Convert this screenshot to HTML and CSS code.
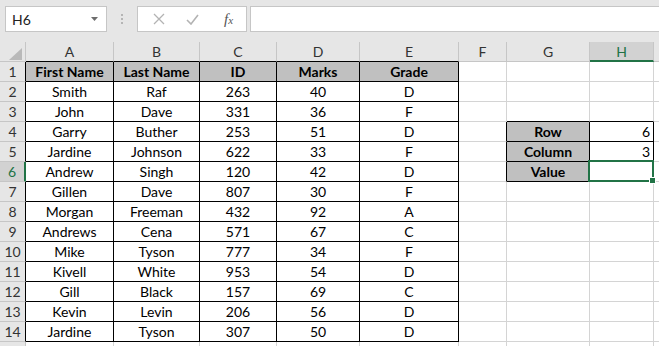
FILE: index.html
```html
<html>
    <head>
        <meta charset="UTF-8">
        <title>Sheet</title>
        <link rel="stylesheet" href="styles.css">
    </head>
    <body>
        <div class="toolbar">
            <div class="namebox">
                <span>H6</span>
                <svg class="caret" width="7" height="4" viewBox="0 0 7 4"><polygon points="0,0 7,0 3.5,4" fill="#6d6d6d"/></svg>
            </div>
            <div class="dots"><i></i><i></i><i></i></div>
            <div class="fxbox">
                <svg width="12" height="12" viewBox="0 0 12 12"><path d="M1 1 L11 11 M11 1 L1 11" stroke="#b3b3b3" stroke-width="1.3" fill="none"/></svg>
                <svg width="13" height="11" viewBox="0 0 13 11"><path d="M1 6 L5 10 L12 1" stroke="#b3b3b3" stroke-width="1.6" fill="none"/></svg>
                <span class="fx">f<sub>x</sub></span>
            </div>
            <div class="formula"></div>
        </div>

        <div class="sheet">
            <!-- column headers -->
            <div class="corner"><svg width="13" height="12" viewBox="0 0 13 12"><polygon points="13,0 13,12 0,12" fill="#b9b9b9"/></svg></div>
            <div class="ch bb">A</div>
            <div class="ch bb">B</div>
            <div class="ch bb">C</div>
            <div class="ch bb">D</div>
            <div class="ch bb">E</div>
            <div class="ch">F</div>
            <div class="ch">G</div>
            <div class="ch on">H</div>
            <div class="ch"></div>

            <!-- 1 -->
            <div class="rh br">1</div>
            <div class="c t hd">First Name</div>
            <div class="c t hd">Last Name</div>
            <div class="c t hd">ID</div>
            <div class="c t hd">Marks</div>
            <div class="c t hd">Grade</div>
            <div class="c"></div><div class="c"></div><div class="c"></div><div class="c"></div>

            <!-- 2 -->
            <div class="rh br">2</div>
            <div class="c t">Smith</div><div class="c t">Raf</div><div class="c t">263</div><div class="c t">40</div><div class="c t">D</div>
            <div class="c"></div><div class="c"></div><div class="c"></div><div class="c"></div>

            <!-- 3 -->
            <div class="rh br">3</div>
            <div class="c t">John</div><div class="c t">Dave</div><div class="c t">331</div><div class="c t">36</div><div class="c t">F</div>
            <div class="c"></div><div class="c bb"></div><div class="c bb"></div><div class="c"></div>

            <!-- 4 -->
            <div class="rh br">4</div>
            <div class="c t">Garry</div><div class="c t">Buther</div><div class="c t">253</div><div class="c t">51</div><div class="c t">D</div>
            <div class="c br"></div><div class="c t hd">Row</div><div class="c t num">6</div><div class="c"></div>

            <!-- 5 -->
            <div class="rh br">5</div>
            <div class="c t">Jardine</div><div class="c t">Johnson</div><div class="c t">622</div><div class="c t">33</div><div class="c t">F</div>
            <div class="c br"></div><div class="c t hd">Column</div><div class="c t num">3</div><div class="c"></div>

            <!-- 6 -->
            <div class="rh on">6</div>
            <div class="c t">Andrew</div><div class="c t">Singh</div><div class="c t">120</div><div class="c t">42</div><div class="c t">D</div>
            <div class="c br"></div><div class="c t hd">Value</div><div class="c t sel"><div class="cursor"><b></b></div></div><div class="c"></div>

            <!-- 7 -->
            <div class="rh br">7</div>
            <div class="c t">Gillen</div><div class="c t">Dave</div><div class="c t">807</div><div class="c t">30</div><div class="c t">F</div>
            <div class="c"></div><div class="c"></div><div class="c"></div><div class="c"></div>

            <!-- 8 -->
            <div class="rh br">8</div>
            <div class="c t">Morgan</div><div class="c t">Freeman</div><div class="c t">432</div><div class="c t">92</div><div class="c t">A</div>
            <div class="c"></div><div class="c"></div><div class="c"></div><div class="c"></div>

            <!-- 9 -->
            <div class="rh br">9</div>
            <div class="c t">Andrews</div><div class="c t">Cena</div><div class="c t">571</div><div class="c t">67</div><div class="c t">C</div>
            <div class="c"></div><div class="c"></div><div class="c"></div><div class="c"></div>

            <!-- 10 -->
            <div class="rh br">10</div>
            <div class="c t">Mike</div><div class="c t">Tyson</div><div class="c t">777</div><div class="c t">34</div><div class="c t">F</div>
            <div class="c"></div><div class="c"></div><div class="c"></div><div class="c"></div>

            <!-- 11 -->
            <div class="rh br">11</div>
            <div class="c t">Kivell</div><div class="c t">White</div><div class="c t">953</div><div class="c t">54</div><div class="c t">D</div>
            <div class="c"></div><div class="c"></div><div class="c"></div><div class="c"></div>

            <!-- 12 -->
            <div class="rh br">12</div>
            <div class="c t">Gill</div><div class="c t">Black</div><div class="c t">157</div><div class="c t">69</div><div class="c t">C</div>
            <div class="c"></div><div class="c"></div><div class="c"></div><div class="c"></div>

            <!-- 13 -->
            <div class="rh br">13</div>
            <div class="c t">Kevin</div><div class="c t">Levin</div><div class="c t">206</div><div class="c t">56</div><div class="c t">D</div>
            <div class="c"></div><div class="c"></div><div class="c"></div><div class="c"></div>

            <!-- 14 -->
            <div class="rh br">14</div>
            <div class="c t">Jardine</div><div class="c t">Tyson</div><div class="c t">307</div><div class="c t">50</div><div class="c t">D</div>
            <div class="c"></div><div class="c"></div><div class="c"></div><div class="c"></div>

            <!-- 15, only its top edge is on screen -->
            <div class="rh"></div>
            <div class="c"></div><div class="c"></div><div class="c"></div><div class="c"></div><div class="c"></div>
            <div class="c"></div><div class="c"></div><div class="c"></div><div class="c"></div>
        </div>
    </body>
</html>
```

FILE: styles.css
```css
body{
    margin: 0;
    overflow: hidden;
    background-color: #fff;
    font-family: "Lato", "Liberation Sans", sans-serif;
}
.toolbar{
    height: 42px;
    background-color: #e6e6e6;
    display: flex;
    align-items: flex-start;
    padding: 6px 0 0 5px;
    box-sizing: border-box;
}
.namebox{
    width: 102px;
    height: 26px;
    box-sizing: border-box;
    background-color: #fff;
    border: 1px solid #c6c6c6;
    display: flex;
    align-items: center;
    justify-content: space-between;
    padding: 0 8px 0 6px;
    font-size: 14px;
    color: #222;
}
.dots{
    width: 30px;
    height: 26px;
    display: flex;
    flex-direction: column;
    align-items: center;
    justify-content: center;
    gap: 2px;
}
.dots i{
    width: 2px;
    height: 2px;
    background-color: #b5b5b5;
}
.fxbox{
    width: 110px;
    height: 26px;
    box-sizing: border-box;
    background-color: #fff;
    border: 1px solid #c6c6c6;
    display: flex;
    align-items: center;
    padding: 0 12px 0 15px;
    gap: 21px;
}
.fx{
    font-family: "Liberation Serif", serif;
    font-style: italic;
    font-size: 15px;
    color: #555;
    margin-left: 4px;
}
.fx sub{
    font-size: 11px;
    vertical-align: 0;
}
.formula{
    flex: 1;
    height: 26px;
    margin-left: 3px;
    box-sizing: border-box;
    background-color: #fff;
    border: 1px solid #c6c6c6;
    border-right: none;
}
.sheet{
    display: grid;
    grid-template-columns: 26px 88px 86px 77px 83px 99px 48px 83px 64px 20px;
    grid-auto-rows: 20px;
    font-size: 14px;
    color: #000;
}
.sheet > div{
    box-sizing: border-box;
    display: flex;
    align-items: center;
    justify-content: center;
    white-space: nowrap;
    overflow: hidden;
}
.corner{
    background-color: #e6e6e6;
    border-right: 1px solid #c6c6c6;
    border-bottom: 1px solid #c6c6c6;
    padding: 4px 3px 0 0;
    justify-content: flex-end !important;
}
.ch{
    background-color: #e6e6e6;
    color: #333;
    border-right: 1px solid #c6c6c6;
    border-bottom: 1px solid #c6c6c6;
}
.rh{
    background-color: #e6e6e6;
    color: #333;
    border-right: 1px solid #c6c6c6;
    border-bottom: 1px solid #c6c6c6;
}
.c{
    border-right: 1px solid #d4d4d4;
    border-bottom: 1px solid #d4d4d4;
}
.t{
    border-color: #000;
}
.br{
    border-right-color: #000;
}
.bb{
    border-bottom-color: #000;
}
.hd{
    background-color: #c0c0c0;
    font-weight: bold;
}
.num{
    justify-content: flex-end !important;
    padding-right: 3px;
}
.ch.on{
    background-color: #d2d2d2;
    color: #217346;
    border-bottom: 2px solid #217346;
}
.rh.on{
    background-color: #d2d2d2;
    color: #217346;
    border-right: 2px solid #217346;
}
.sheet > .sel{
    position: relative;
    overflow: visible;
}
.cursor{
    position: absolute;
    left: -2px;
    top: -2px;
    right: -1px;
    bottom: -1px;
    border: 2px solid #217346;
}
.cursor b{
    position: absolute;
    right: -4px;
    bottom: -4px;
    width: 5px;
    height: 5px;
    background-color: #217346;
    border: 1px solid #fff;
}
```
